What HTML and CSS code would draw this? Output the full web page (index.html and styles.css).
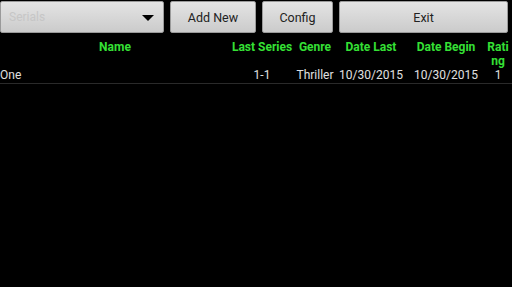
FILE: index.html
```html
<!DOCTYPE html>
<html lang="en">
<head>
    <meta charset="UTF-8">
    <meta name="viewport" content="width=device-width, initial-scale=1.0">
    <title>Serials</title>
    <link rel="stylesheet" href="styles.css">
</head>
<body>
    <div class="toolbar">
        <div class="spinner">
            <span class="spinner-text">Serials</span>
            <span class="spinner-arrow"></span>
        </div>
        <button class="btn btn-add">Add New</button>
        <button class="btn btn-config">Config</button>
        <button class="btn btn-exit">Exit</button>
    </div>
    <div class="table">
        <div class="row head">
            <div class="cell name">Name</div>
            <div class="cell">Last Series</div>
            <div class="cell">Genre</div>
            <div class="cell">Date Last</div>
            <div class="cell">Date Begin</div>
            <div class="cell rating">Rating</div>
        </div>
        <div class="row data">
            <div class="cell name">One</div>
            <div class="cell">1-1</div>
            <div class="cell">Thriller</div>
            <div class="cell">10/30/2015</div>
            <div class="cell">10/30/2015</div>
            <div class="cell rating">1</div>
        </div>
    </div>
</body>
</html>
```

FILE: styles.css
```css
body {
    margin: 0;
    background: #000;
    font-family: Roboto, "Liberation Sans", sans-serif;
    width: 512px;
    height: 287px;
    overflow: hidden;
}
.toolbar {
    display: flex;
    gap: 6px;
    padding-top: 1px;
    height: 32px;
}
.spinner,
.btn {
    box-sizing: border-box;
    height: 32px;
    background: linear-gradient(#e4e4e4, #cbcbcb);
    border: 1px solid #9a9a9a;
    border-radius: 2px;
}
.spinner {
    width: 164px;
    display: flex;
    align-items: center;
    justify-content: space-between;
    padding: 0 9px 0 8px;
}
.spinner-text {
    color: #c6c6c6;
    font-size: 12px;
}
.spinner-arrow {
    width: 0;
    height: 0;
    border-left: 6px solid transparent;
    border-right: 6px solid transparent;
    border-top: 6px solid #000;
    margin-top: 2px;
}
.btn {
    font-family: Roboto, "Liberation Sans", sans-serif;
    font-size: 12.5px;
    color: #222;
    padding: 0;
}
.btn-add { width: 86px; }
.btn-config { width: 71px; }
.btn-exit { width: 169px; }
.table {
    margin-top: 6px;
}
.row {
    display: grid;
    grid-template-columns: 230px 64px 42px 70px 80px 24px;
    font-size: 12px;
    line-height: 14px;
}
.head {
    color: #35e035;
    font-weight: bold;
    padding-top: 1px;
}
.data {
    color: #e0e0e0;
    padding-bottom: 1px;
    border-bottom: 1px solid #2a2a2a;
}
.cell {
    text-align: center;
    white-space: nowrap;
}
.head .rating {
    white-space: normal;
    word-break: break-all;
}
.data .name {
    text-align: left;
}
```
